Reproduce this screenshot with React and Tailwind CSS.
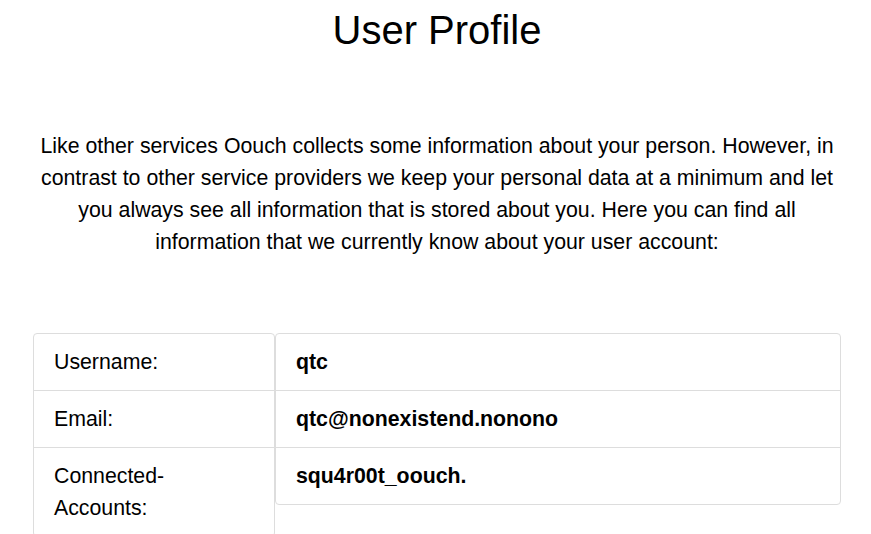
export default function App() {
    const labels = ['Username:', 'Email:', 'Connected-Accounts:']
    const values = ['qtc', 'qtc@nonexistend.nonono', 'squ4r00t_oouch.']

    return (
        <div className="min-h-screen bg-white text-black font-['Liberation_Sans',Arial,sans-serif]">
            <div className="ml-[33px] w-[808px] pt-[6px]">
                <h1 className="text-center text-[40px] leading-[48px] font-normal">User Profile</h1>

                <p className="mt-[76px] text-center text-[21.3px] leading-[32px]">
                    Like other services Oouch collects some information about your person. However, in contrast to other
                    service providers we keep your personal data at a minimum and let you always see all information that is
                    stored about you. Here you can find all information that we currently know about your user account:
                </p>

                <div className="mt-[75px] grid grid-cols-[242px_566px] items-start">
                    <div className="border border-[#dddddd] rounded-[4px] divide-y divide-[#dddddd]">
                        {labels.map((label) => (
                            <div key={label} className="px-5 py-3 text-[21.3px] leading-[32px]">
                                {label}
                            </div>
                        ))}
                    </div>
                    <div className="border border-[#dddddd] rounded-[4px] divide-y divide-[#dddddd]">
                        {values.map((value) => (
                            <div key={value} className="px-5 py-3 text-[21.3px] leading-[32px] font-bold">
                                {value}
                            </div>
                        ))}
                    </div>
                </div>
            </div>
        </div>
    )
}
